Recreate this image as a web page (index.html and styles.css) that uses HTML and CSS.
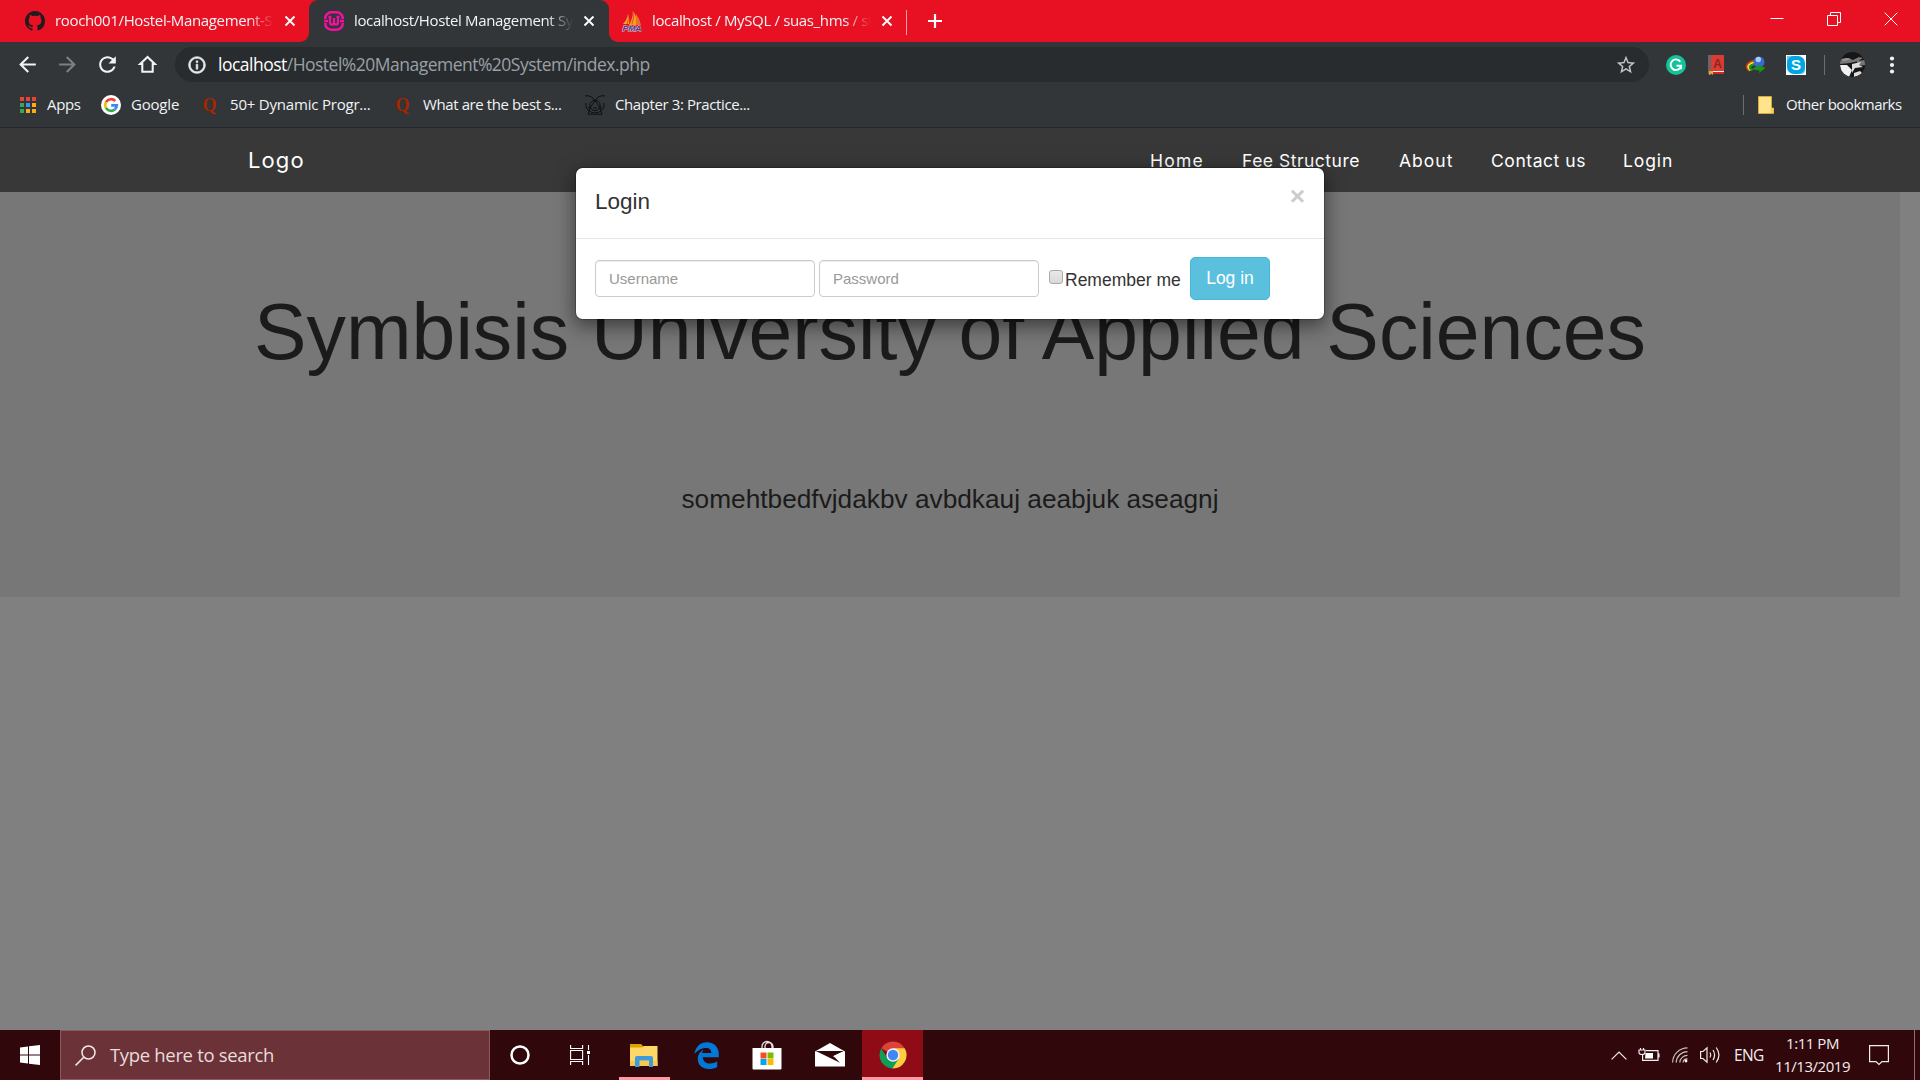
FILE: index.html
```html
<!DOCTYPE html>
<html lang="en">
<head>
<meta charset="utf-8">
<title>localhost/Hostel Management System</title>
<link rel="stylesheet" href="styles.css">
</head>
<body>
<div class="titlebar">
  <div class="tab tab-first">
    <svg class="fav" viewBox="0 0 16 16" fill="#211a1e"><path d="M8 0C3.58 0 0 3.58 0 8c0 3.54 2.29 6.53 5.47 7.59.4.07.55-.17.55-.38 0-.19-.01-.82-.01-1.49-2.01.37-2.53-.49-2.69-.94-.09-.23-.48-.94-.82-1.13-.28-.15-.68-.52-.01-.53.63-.01 1.08.58 1.23.82.72 1.21 1.87.87 2.33.66.07-.52.28-.87.51-1.07-1.78-.2-3.64-.89-3.64-3.95 0-.87.31-1.59.82-2.15-.08-.2-.36-1.02.08-2.12 0 0 .67-.21 2.2.82.64-.18 1.32-.27 2-.27s1.36.09 2 .27c1.53-1.04 2.2-.82 2.2-.82.44 1.1.16 1.92.08 2.12.51.56.82 1.27.82 2.15 0 3.07-1.87 3.75-3.65 3.95.29.25.54.73.54 1.48 0 1.07-.01 1.93-.01 2.2 0 .21.15.46.55.38A8.01 8.01 0 0 0 16 8c0-4.42-3.58-8-8-8z"/></svg>
    <span class="tab-text">rooch001/Hostel-Management-S</span>
    <svg class="tab-x" viewBox="0 0 12 12"><path d="M1.5 1.5l9 9M10.5 1.5l-9 9"/></svg>
  </div>
  <div class="tab-wrap"><div class="tab tab-active">
    <svg class="fav" viewBox="0 0 20 20" fill="none" stroke="#f40fa0"><path d="M1.300 8V7.300a6 6 0 0 1 6-6h5.400a6 6 0 0 1 6 6V8M1.300 12v.7a6 6 0 0 0 6 6h5.400a6 6 0 0 0 6-6V12M0 10h4M16 10h4" stroke-width="2.500"/><path d="M6 5v6.500q0 2 2 2t2-2V7v4.500q0 2 2 2t2-2V5M4.500 5.800h3M12.500 5.800h3" stroke-width="2.300"/></svg>
    <span class="tab-text">localhost/Hostel Management Sys</span>
    <svg class="tab-x" viewBox="0 0 12 12"><path d="M1.500 1.500l9 9M10.500 1.500l-9 9"/></svg>
  </div></div>
  <div class="tab tab-last">
    <svg class="fav" viewBox="0 0 20 20"><path d="M1 13Q5 9 6 3q2 5 1 10z" fill="#f7a823"/><path d="M7 14Q11 7 11 0q5 7 3 14z" fill="#f89c1c"/><path d="M14 3q4 5 5 11h-5z" fill="#e9702a"/><path d="M11 1q1.500 6-1 12M6 4q1 5-1 9" stroke="#e0502a" fill="none"/><text x="10" y="19.600" text-anchor="middle" textLength="19" lengthAdjust="spacingAndGlyphs" class="pma">PMA</text></svg>
    <span class="tab-text">localhost / MySQL / suas_hms / st</span>
    <svg class="tab-x" viewBox="0 0 12 12"><path d="M1.500 1.500l9 9M10.500 1.500l-9 9"/></svg>
    <i class="tab-sep"></i>
    <svg class="plus" viewBox="0 0 14 14"><path d="M7 0v14M0 7h14"/></svg>
    <div class="win">
      <svg viewBox="0 0 14 14"><path d="M.5 6.500h13"/></svg>
      <svg viewBox="0 0 14 14"><path d="M.5 3.500h10v10H.5zM3.500 3V.5h10v10H11"/></svg>
      <svg viewBox="0 0 14 14"><path d="M.7 .7l12.600 12.600M13.300 .7L.7 13.300"/></svg>
    </div>
  </div>
</div>
<div class="toolbar">
  <svg class="tb" viewBox="0 0 24 24"><path d="M20 11H7.830l5.590-5.590L12 4l-8 8 8 8 1.410-1.410L7.830 13H20v-2z"/></svg>
  <svg class="tb dim" viewBox="0 0 24 24"><path d="M12 4l-1.410 1.410L16.170 11H4v2h12.170l-5.580 5.590L12 20l8-8z"/></svg>
  <svg class="tb" viewBox="0 0 24 24"><path d="M17.650 6.350C16.200 4.900 14.210 4 12 4c-4.420 0-7.990 3.580-7.990 8s3.570 8 7.990 8c3.730 0 6.840-2.550 7.730-6h-2.080c-.82 2.330-3.040 4-5.650 4-3.310 0-6-2.690-6-6s2.690-6 6-6c1.660 0 3.140.69 4.220 1.780L13 11h7V4l-2.350 2.350z"/></svg>
  <svg class="tb" viewBox="0 0 24 24"><path d="M12 4.800L5 11.500h2V19h10v-7.500h2z" fill="none" stroke="#f1f3f4" stroke-width="2"/></svg>
  <div class="omni">
    <svg class="info" viewBox="0 0 24 24"><path stroke="#e8eaed" stroke-width=".8" d="M11 17h2v-6h-2v6zm1-15C6.480 2 2 6.480 2 12s4.480 10 10 10 10-4.480 10-10S17.520 2 12 2zm0 18c-4.410 0-8-3.590-8-8s3.590-8 8-8 8 3.590 8 8-3.590 8-8 8zM11 9h2V7h-2v2z"/></svg>
    <span class="url"><b>localhost</b>/Hostel%20Management%20System/index.php</span>
    <svg class="star" viewBox="0 0 24 24"><path d="M22 9.240l-7.190-.62L12 2 9.190 8.630 2 9.240l5.460 4.730L5.820 21 12 17.270 18.180 21l-1.630-7.030L22 9.240zM12 15.400l-3.760 2.270 1-4.280-3.320-2.880 4.380-.38L12 6.100l1.710 4.040 4.380.38-3.320 2.880 1 4.280L12 15.400z"/></svg>
  </div>
  <div class="exts">
    <svg viewBox="0 0 20 20"><circle cx="10" cy="10" r="10" fill="#15c39a"/><path d="M14.300 6.700A5.300 5.300 0 1 0 15 11.300M10.500 10.700H15v3.500" fill="none" stroke="#fff" stroke-width="1.900"/></svg>
    <svg viewBox="0 0 20 20"><path d="M2 0h3v20H3L2 18z" fill="#6b6568"/><path d="M5 0h13v16H5z" fill="#d93c32"/><path d="M5 16h13v1H5z" fill="#f1eeee"/><path d="M5 17h13v2H5z" fill="#c92a22"/><path d="M3 16h4v4l-2-1.500L3 20z" fill="#f0a826"/><text x="11.500" y="12.500" text-anchor="middle" class="book">A</text></svg>
    <svg viewBox="0 0 20 20"><g fill="none"><path d="M3 16Q-2 11 3 7.500 7 4.500 11 6" stroke="#d7301e" stroke-width="1.600"/><path d="M4.500 15.500Q0 11.500 4 9q3-2.500 7-1" stroke="#f5e21c" stroke-width="1.900"/><path d="M6.500 15.500Q2 13 5.500 10.500 8 8.500 11 9.500" stroke="#1a9a34" stroke-width="2"/></g><circle cx="13" cy="7" r="5.500" fill="#376bd0"/><circle cx="12.300" cy="4.500" r="2.700" fill="#a9cbf8"/><path d="M6 14q3-3 7-2.500L12 9.500l7.500 3.500-6.500 5 .5-2.500Q9 15 6 14z" fill="#1c9417"/></svg>
    <svg viewBox="0 0 20 20"><path d="M0 0h20v20H0z" fill="#fff"/><rect x="1" y="1" width="18" height="18" rx="7" fill="#00a5e5"/><path d="M1 1h9v9H1zM10 10h9v5q0 4-4 4h-5z" fill="#00a5e5" opacity=".6"/><text x="10" y="15.300" text-anchor="middle" class="skype">S</text></svg>
  </div>
  <i class="tb-sep"></i>
  <svg class="avatar" viewBox="0 0 25 25"><defs><clipPath id="av"><circle cx="12.500" cy="12.500" r="12.500"/></clipPath></defs><g clip-path="url(#av)"><path d="M0 0h25v25H0z" fill="#161616"/><path d="M0 8l8-2 5 2 6-3 4 1-5 3-8 2-10 1zM17 9l8-1v5l-8 1z" fill="#777"/><path d="M0 13l7 0 5 5-3 7H2z" fill="#f2f2f2"/><path d="M12 12l9-2-2 3 4 2-8 1-3 5zM14 21l6-2 3 3-9 3z" fill="#ddd"/><path d="M1 7l6-1 4 1-7 2z" fill="#999"/></g></svg>
  <svg class="dots" viewBox="0 0 6 18"><circle cx="3" cy="2.500" r="2.100"/><circle cx="3" cy="9" r="2.100"/><circle cx="3" cy="15.500" r="2.100"/></svg>
</div>
<div class="bookmarks">
  <div class="bm bm1"><svg viewBox="0 0 20 20"><path d="M2 2h4v4H2zM8 2h4v4H8zM14 2h4v4h-4z" fill="#ea4335"/><path d="M2 8h4v4H2zM2 14h4v4H2z" fill="#34a853"/><path d="M8 8h4v4H8z" fill="#3593f5"/><path d="M14 8h4v4h-4zM8 14h4v4H8zM14 14h4v4h-4z" fill="#fbab15"/></svg><span>Apps</span></div>
  <div class="bm bm2"><svg viewBox="0 0 20 20"><circle cx="10" cy="10" r="10" fill="#fff"/><g fill="none" stroke-width="2.700"><path d="M14.200 6A5.800 5.800 0 0 0 5 7.100" stroke="#ea4335"/><path d="M5 7.100a5.800 5.800 0 0 0 0 5.800" stroke="#fbbc05"/><path d="M5 12.900a5.800 5.800 0 0 0 8.800 1.500" stroke="#34a853"/><path d="M13.800 14.400a5.600 5.600 0 0 0 2-4H10.200" stroke="#4285f4"/></g></svg><span>Google</span></div>
  <div class="bm bm3"><svg viewBox="0 0 20 20"><text x="9.500" y="15.500" text-anchor="middle" class="quora">Q</text></svg><span>50+ Dynamic Progr...</span></div>
  <div class="bm bm4"><svg viewBox="0 0 20 20"><text x="9.500" y="15.500" text-anchor="middle" class="quora">Q</text></svg><span>What are the best s...</span></div>
  <div class="bm bm5"><svg viewBox="0 0 20 20" fill="none" stroke="#0d0f10" stroke-width="1"><path d="M0 .8h3.500q3 0 6.500 4.700Q13.500.8 16.500.8H20M10 5.500Q4 13 3 19.200h14Q16 13 10 5.500z"/><circle cx="10" cy="10.500" r="5.200"/><path d="M1 8q-1 4 2 7 3 3 7 3t7-3q3-3 2-7M3 13l3-1M17 13l-3-1M8 13h4"/></svg><span>Chapter 3: Practice...</span></div>
  <i class="bm-sep"></i>
  <svg class="folder" viewBox="0 0 16 18"><path d="M.5.5h13V12h2v5.500H.5z" fill="#ffe48b" stroke="#d3a93c"/><path d="M12.500 12h3v5h-3z" fill="#f7cf58"/></svg>
  <span class="other">Other bookmarks</span>
</div>
<main class="page">
  <nav class="nav">
    <a class="brand">Logo</a>
    <a class="n1">Home</a><a class="n2">Fee Structure</a><a class="n3">About</a><a class="n4">Contact us</a><a class="n5">Login</a>
  </nav>
  <section class="jumbo">
    <h1>Symbisis University of Applied Sciences</h1>
    <p>somehtbedfvjdakbv avbdkauj aeabjuk aseagnj</p>
  </section>
  <div class="modal">
    <div class="modal-head"><h4>Login</h4><span class="close">×</span></div>
    <form class="modal-body">
      <input type="text" placeholder="Username">
      <input type="password" placeholder="Password">
      <span class="check"></span><label>Remember me</label>
      <button type="button">Log in</button>
    </form>
  </div>
</main>
<footer class="taskbar">
  <div class="start"><svg width="20" height="20" viewBox="0 0 20 20" fill="#fff"><path d="M0 2.600l8-1.100v8H0zM9 1.300L20 0v9.500H9zM0 10.500h8v8l-8-1zM9 10.500h11V20L9 18.700z"/></svg></div>
  <div class="search"><svg width="21" height="21" viewBox="0 0 21 21" fill="none" stroke="#f3e9ea" stroke-width="1.500"><circle cx="13.500" cy="7.500" r="6.500"/><path d="M9 12L.6 20.400"/></svg><span>Type here to search</span></div>
  <div class="task w60"><svg width="20" height="20" viewBox="0 0 20 20"><circle cx="10" cy="10" r="8.500" fill="none" stroke="#fff" stroke-width="2.500"/></svg></div>
  <div class="task w60"><svg width="20" height="20" viewBox="0 0 20 20" fill="none" stroke="#fff" stroke-width="1.100"><path d="M.6 0v3.500h12V0M.6 5.500h12v9H.6zM.6 20v-3.500h12V20M18.500 0v5M18.500 10v10"/><path d="M17 6h3v3h-3z" fill="#fff" stroke="none"/></svg></div>
  <div class="task w68 open"><svg width="28" height="24" viewBox="0 0 28 24"><path d="M0 1h11l2.500 2.500V6H0z" fill="#e0a100"/><path d="M0 4.500h12l2-1.500h13.500V23H0z" fill="#ffd766"/><path d="M0 18h27.500v5H0z" fill="#f7c750"/><path d="M5 24V15q0-2 2-2h14q2 0 2 2v9h-4v-6.500H9.500V24z" fill="#3f9ad9"/></svg></div>
  <div class="task w56"><svg width="25" height="27" viewBox="0 0 25 27"><path d="M.3 12C1.500 5 6 .3 13 .3c7.500 0 11.800 5.200 11.800 11.700v3.200H8.700c.3 4.300 3.600 6.300 7.500 6.300 2.700 0 4.800-.6 7-1.900v5.300C20.800 26.200 18 27 14.900 27 8 27 3.800 22.800 3.800 17c0-4.300 2.300-7.600 6-9.500-1.200 1.300-1.600 2.800-1.700 3.600h9.200c0-3.200-1.600-5.200-5.300-5.200C7.500 5.900 3.200 8.500.3 12z" fill="#0078d7"/></svg></div>
  <div class="task w66"><svg width="30" height="30" viewBox="0 0 30 30"><path d="M10 8V6.500a5 5 0 0 1 10 0V8M13 8V6.500a4 4 0 0 1 8 0V8" fill="none" stroke="#e9dfe0" stroke-width="1.300"/><path d="M.5 8h29v20.500q0 1-1 1h-27q-1 0-1-1z" fill="#fff"/><path d="M8.500 12.500h6v6h-6z" fill="#f25022"/><path d="M15.500 12.500h6v6h-6z" fill="#7fba00"/><path d="M8.500 19h6v6h-6z" fill="#00a4ef"/><path d="M15.500 19h6v6h-6z" fill="#ffb900"/></svg></div>
  <div class="task w60"><svg width="30" height="24" viewBox="0 0 30 24"><path d="M0 8.500L15 0l15 8.500v15H0z" fill="#fff"/><path d="M.8 8h28.400L18.500 13l6.500 6.800z" fill="#30080c"/><path d="M18 13.200L29.300 8v8l-6-.2z" fill="#fff"/></svg></div>
  <div class="task w61 open active"><svg width="28" height="28" viewBox="0 0 28 28"><path d="M14 14L2.300 7.200A13.500 13.500 0 0 1 25.700 7.300z" fill="#db4437"/><path d="M14 14V7.300h11.700A13.500 13.500 0 0 1 13.500 27.500z" fill="#ffcd40"/><path d="M14 14l5.500 4-6 9.500A13.500 13.500 0 0 1 2.300 7.200l6 10z" fill="#0f9d58"/><circle cx="14" cy="14" r="6.700" fill="#f1f1f1"/><circle cx="14" cy="14" r="5.200" fill="#4285f4"/></svg></div>
  <div class="tray">
    <svg width="16" height="9" viewBox="0 0 16 9"><path d="M.6 8.400L8 1l7.400 7.400"/></svg>
    <svg class="bat" width="21" height="14" viewBox="0 0 21 14"><path d="M7 2.600h12v9.800H3.600V7M20 5.500v4"/><path d="M6.500 5H14v5.500H6z" fill="#fff" stroke="none"/><path d="M0 2h6v2.500q0 2-3 2t-3-2zM1.500 0v2M4.500 0v2"/></svg>
    <svg class="wifi" width="16" height="16" viewBox="0 0 16 16"><g opacity=".8"><path d="M.6 15.500A15 15 0 0 1 15.500.8M4.200 15.500A11.300 11.300 0 0 1 15.500 4.600M7.800 15.500a7.600 7.600 0 0 1 7.700-7.200M11 15.500a4.300 4.300 0 0 1 4.500-3.700"/></g><circle cx="14" cy="14" r="1.400" fill="#fff" stroke="none"/></svg>
    <svg class="vol" width="21" height="18" viewBox="0 0 21 18"><path d="M.6 5.500H3l4-3.700v14.400l-4-3.700H.6zM10 6.500q1.500 2.500 0 5M13 4q3.200 5 0 10M16.200 1.500q5.500 7.500 0 15"/></svg>
    <span class="eng">ENG</span>
    <div class="clock"><span>1:11 PM</span><span>11/13/2019</span></div>
    <svg class="note" width="20" height="20" viewBox="0 0 20 20"><path d="M.6.600h18.800v16H13l-3 2.900-3-2.900H.6z"/></svg>
    <i class="peek"></i>
  </div>
</footer>
</body>
</html>
```
FILE: styles.css
```css
* { box-sizing: border-box; }
html, body { margin: 0; width: 1920px; height: 1080px; overflow: hidden; }
body { display: flex; flex-direction: column; background: #323639; font-family: "Open Sans", "Noto Sans", sans-serif; font-size: 15px; color: #f1f3f4; }
svg, i { flex: none; display: block; }
svg { overflow: visible; }
span, a, label { white-space: nowrap; }

.titlebar { display: flex; height: 42px; flex: none; }
.tab { display: flex; align-items: center; height: 42px; background: #e81123; }
.tab-first { width: 309px; padding-left: 25px; border-bottom-right-radius: 9px; }
.tab-wrap { width: 300px; background: linear-gradient(#e81123 50%, #323639 50%); }
.tab-active { background: #323639; border-radius: 9px 9px 0 0; padding-left: 15px; }
.tab-last { flex: 1; padding-left: 13px; border-bottom-left-radius: 9px; }
.fav { width: 20px; height: 20px; }
.tab-text { overflow: hidden; margin-left: 10px; width: 219px; line-height: 24px; padding-bottom: 2px; letter-spacing: -.35px; -webkit-mask-image: linear-gradient(90deg, #000 88%, transparent); mask-image: linear-gradient(90deg, #000 88%, transparent); }
.tab-x { width: 12px; height: 12px; margin-left: 10px; stroke: #fff; stroke-width: 1.9; fill: none; }
.tab-sep { width: 1px; height: 25px; background: #f6a0a8; margin: 2px 0 0 13px; }
.plus { width: 14px; height: 14px; margin-left: 21px; stroke: #fff; stroke-width: 2.2; }
.win { display: flex; gap: 43px; margin: -5px 22px 0 auto; }
.win svg { width: 14px; height: 14px; fill: none; stroke: #fff; stroke-width: 1; }
.pma { font: italic bold 8px "Liberation Sans", sans-serif; fill: #3a4088; stroke: #e6c3cf; stroke-width: 1px; paint-order: stroke; }

.toolbar { display: flex; align-items: center; height: 45px; flex: none; padding-left: 15px; }
.tb { width: 25px; height: 25px; margin-right: 15px; fill: #f1f3f4; }
.dim { fill: #7d8083; }
.omni { display: flex; align-items: center; width: 1474px; height: 35px; border-radius: 18px; background: #282c2f; padding: 0 12px; }
.info { width: 20px; height: 20px; fill: #e8eaed; }
.url { margin-left: 11px; padding-bottom: 1px; font-size: 17.5px; color: #9aa0a6; letter-spacing: -.51px; line-height: 30px; }
.url b { font-weight: 400; color: #fff; }
.star { width: 22px; height: 22px; fill: #c4c7c9; margin-left: auto; }
.exts { display: flex; gap: 20px; margin-left: 17px; }
.exts svg { width: 20px; height: 20px; }
.book { font: bold 12px "Liberation Sans", sans-serif; fill: #8e241e; }
.skype { font: bold 15px "Liberation Sans", sans-serif; fill: #fff; }
.tb-sep { width: 1px; height: 20px; background: #6b6e71; margin-left: 18px; }
.avatar { width: 25px; height: 25px; margin-left: 15px; }
.dots { width: 6px; height: 18px; margin-left: 24px; fill: #f1f3f4; }

.bookmarks { display: flex; align-items: center; height: 41px; flex: none; padding: 0 0 5px 18px; border-bottom: 1px solid #25282b; }
.bm { display: flex; align-items: center; gap: 10px; flex: none; }
.bm svg { width: 20px; height: 20px; }
.bm span, .other { letter-spacing: -.35px; line-height: 22px; padding-bottom: 2px; }
.bm1 { width: 83px; } .bm2 { width: 99px; } .bm3 { width: 193px; } .bm4 { width: 192px; }
.bm1 span { margin-left: -1px; }
.bm2 span, .bm3 span { letter-spacing: -.2px; }
.bm4 span, .bm5 span { letter-spacing: -.4px; }
.quora { font: bold 18px "Liberation Serif", serif; fill: #a82400; }
.bm-sep { width: 1px; height: 20px; background: #6b6e71; margin-left: auto; }
.folder { width: 16px; height: 18px; margin: 0 12px 0 14px; }
.other { width: 134px; letter-spacing: -.5px; }

.page { position: relative; height: 902px; flex: none; background: #808080; font-family: "Liberation Sans", Arial, sans-serif; }
.nav { display: flex; align-items: center; height: 64px; background: #383838; color: #fff; font-family: Inter, sans-serif; font-size: 17.5px; padding-left: 248px; }
.nav a { flex: none; line-height: 30px; padding-top: 2px; }
.nav .brand { font-size: 22px; width: 902px; padding-top: 0; letter-spacing: 1.1px; }
.n1 { width: 92px; letter-spacing: 1.2px; }
.n2 { width: 157px; letter-spacing: .5px; }
.n3 { width: 92px; letter-spacing: 1px; }
.n4 { width: 132px; letter-spacing: .55px; }
.n5 { letter-spacing: .9px; }
.jumbo { width: 1900px; height: 405px; background: #777; color: #1b1b1b; text-align: center; padding-top: 97px; }
.jumbo h1 { margin: 0; font-weight: 400; font-size: 78.75px; line-height: 87px; white-space: nowrap; }
.jumbo p { margin: 105px 0 0; font-size: 26.25px; line-height: 37px; }
.modal { position: absolute; left: 575px; top: 39px; width: 750px; height: 153px; background: #fff; color: #333; border: 1px solid rgba(0,0,0,.2); background-clip: padding-box; border-radius: 7.5px; box-shadow: 0 6px 19px rgba(0,0,0,.5); }
.modal-head { display: flex; justify-content: space-between; height: 71px; padding: 17px 19px; border-bottom: 1px solid #e5e5e5; }
.modal-head h4 { margin: 0; font-weight: 400; font-size: 22.5px; line-height: 34px; }
.close { font-weight: 700; font-size: 26.25px; line-height: 22px; color: #ccc; }
.modal-body { display: flex; align-items: center; padding: 18px 0 0 19px; margin: 0; font-size: 17.5px; }
.modal-body input { width: 220px; height: 37px; margin: 0 4px 0 0; padding: 0 13px; border: 1px solid #ccc; border-radius: 4px; font: 15px "Liberation Sans", Arial, sans-serif; box-shadow: inset 0 1px 1px rgba(0,0,0,.075); }
.modal-body input::placeholder { color: #999; opacity: 1; }
.check { width: 14px; height: 14px; margin: -3px 2px 0 6px; border: 1px solid #aaa; border-radius: 3px; background: linear-gradient(#e9e9e9, #d9d9d9); }
.modal-body label { width: 125px; line-height: 24px; padding-top: 2px; }
.modal-body button { width: 80px; height: 43px; padding: 0 0 1px; border: 1px solid #46b8da; border-radius: 5px; background: #5bc0de; color: #fff; font: 17.5px "Liberation Sans", Arial, sans-serif; }

.taskbar { display: flex; height: 50px; flex: none; background: #30080c; }
.start { display: flex; align-items: center; justify-content: center; width: 60px; }
.search { display: flex; align-items: center; gap: 14px; width: 430px; padding-left: 14px; background: #6b3237; border: 1px solid #8a5a5e; font-size: 18.5px; color: #e8dcdd; }
.search span { letter-spacing: -.33px; padding-bottom: 2px; }
.task { display: flex; align-items: center; justify-content: center; flex: none; }
.w56 { width: 56px; } .w60 { width: 60px; } .w61 { width: 61px; } .w66 { width: 66px; } .w68 { width: 68px; }
.open { background: linear-gradient(#ff9aa5, #ff9aa5) center bottom / 51px 3px no-repeat; }
.active { background: linear-gradient(#ff9aa5, #ff9aa5) center bottom / 61px 3px no-repeat #8f0b16; margin-left: 2px; }
.tray { display: flex; align-items: center; margin-left: auto; color: #f3ecec; }
.tray svg { fill: none; stroke: #f3ecec; stroke-width: 1.2; }
.tray .bat, .tray .wifi, .tray .vol { margin-left: 12px; }
.eng { margin-left: 13px; width: 41px; font-size: 15.5px; letter-spacing: -.7px; }
.clock { display: flex; flex-direction: column; width: 75px; text-align: center; line-height: 23px; padding-bottom: 1px; letter-spacing: -.45px; }
.note { margin-left: 19px; }
.peek { width: 1px; height: 50px; background: #8a7375; margin: 0 5px 0 25px; }
```
